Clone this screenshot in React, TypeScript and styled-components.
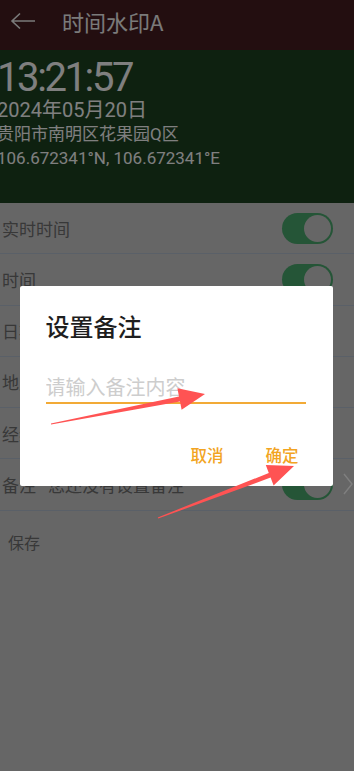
import React from "react";
import styled, { createGlobalStyle } from "styled-components";

const Global = createGlobalStyle`
  html, body { margin: 0; padding: 0; }
  body { background: #cccccc; font-family: "Noto Sans CJK SC", "Noto Sans", sans-serif; }
  * { box-sizing: border-box; }
`;

const Page = styled.div`
  width: 354px;
  min-height: 771px;
  background: #cccccc;
  overflow: hidden;
`;

const Header = styled.header`
  height: 50px;
  background: #461c20;
  display: flex;
  align-items: flex-start;
  padding: 11px 0 0 10px;
  gap: 26px;
`;

const BackIcon = styled.svg`
  width: 26px;
  height: 20px;
  flex: none;
`;

const Title = styled.h1`
  margin: 0;
  font-size: 22px;
  line-height: 21px;
  font-weight: 400;
  color: #f4f4f4;
`;

const Preview = styled.section`
  background: #1c4220;
  padding: 8px 0 28px 0;
  margin-left: -3px;
  color: #ffffff;
  height: 153px;
`;

const Clock = styled.div`
  font-family: Roboto, "Noto Sans CJK SC", sans-serif;
  font-size: 40px;
  line-height: 40px;
  letter-spacing: -2.4px;
`;

const InfoLine = styled.div<{ $size: number }>`
  font-family: Roboto, "Noto Sans CJK SC", sans-serif;
  font-size: ${(p) => p.$size}px;
  line-height: 24px;
  white-space: nowrap;
  &:first-of-type { margin-top: 5px; }
`;

const List = styled.div`
  display: flex;
  flex-direction: column;
`;

const Row = styled.div`
  height: 51.25px;
  display: flex;
  align-items: center;
  border-bottom: 1px solid #b4c0d0;
  padding: 0 0 0 2px;
`;

const RowLabel = styled.span`
  font-size: 17px;
  color: #707070;
  flex: 1;
  display: flex;
  gap: 12px;
  white-space: nowrap;
`;

const Switch = styled.div`
  width: 51px;
  height: 31px;
  border-radius: 16px;
  background: #4aaa6e;
  position: relative;
  margin-right: 21px;
  flex: none;
`;

const Knob = styled.div`
  position: absolute;
  right: 2px;
  top: 2px;
  width: 27px;
  height: 27px;
  border-radius: 50%;
  background: #cccccc;
`;

const Chevron = styled.svg`
  width: 10px;
  height: 22px;
  margin-left: -11px;
  margin-right: 1px;
  flex: none;
`;

const SaveText = styled.div`
  font-size: 16px;
  color: #707070;
  padding: 19px 0 0 8px;
  line-height: 24px;
`;

const Overlay = styled.div`
  position: fixed;
  inset: 0;
  background: rgba(0, 0, 0, 0.5);
  display: flex;
  align-items: center;
  justify-content: center;
  padding-right: 2px;
`;

const Dialog = styled.div`
  width: 313px;
  background: #ffffff;
  border-radius: 2px;
  padding: 24px 27px 19px 26px;
  display: flex;
  flex-direction: column;
`;

const DialogTitle = styled.h2`
  margin: 0;
  font-size: 24px;
  line-height: 32px;
  font-weight: 500;
  color: #1e1e1e;
`;

const Input = styled.input`
  margin-top: 30px;
  height: 32px;
  border: none;
  border-bottom: 2px solid #f2aa36;
  outline: none;
  padding: 0;
  font-family: "Noto Sans CJK SC", sans-serif;
  font-size: 20px;
  color: #222;
  background: transparent;
  &::placeholder { color: #cdcdcd; }
`;

const Actions = styled.div`
  margin-top: 39px;
  display: flex;
  justify-content: flex-end;
  gap: 42px;
  padding-right: 7px;
`;

const ActionButton = styled.button`
  border: none;
  background: none;
  padding: 0;
  font-family: "Noto Sans CJK SC", sans-serif;
  font-size: 16.5px;
  line-height: 24px;
  font-weight: 500;
  color: #f2a422;
`;

const Annotations = styled.svg`
  position: fixed;
  left: 0;
  top: 0;
  width: 354px;
  height: 771px;
  pointer-events: none;
`;

const rows = ["实时时间", "时间", "日期", "地点", "经纬度"];

export default function App() {
  return (
    <>
      <Global />
      <Page>
        <Header>
          <BackIcon viewBox="0 0 26 20">
            <path d="M25 10 H2 M10 2.5 L2 10 L10 17.5" fill="none" stroke="#f4f4f4" strokeWidth="1.6" />
          </BackIcon>
          <Title>时间水印A</Title>
        </Header>
        <Preview>
          <Clock>13:21:57</Clock>
          <InfoLine $size={20}>2024年05月20日</InfoLine>
          <InfoLine $size={17}>贵阳市南明区花果园Q区</InfoLine>
          <InfoLine $size={17}>106.672341°N, 106.672341°E</InfoLine>
        </Preview>
        <List>
          {rows.map((r) => (
            <Row key={r}>
              <RowLabel>{r}</RowLabel>
              <Switch>
                <Knob />
              </Switch>
            </Row>
          ))}
          <Row>
            <RowLabel>
              <span>备注</span>
              <span>您还没有设置备注</span>
            </RowLabel>
            <Switch>
              <Knob />
            </Switch>
            <Chevron viewBox="0 0 10 22">
              <path d="M1 1 L9 11 L1 21" fill="none" stroke="#ffffff" strokeWidth="1.4" />
            </Chevron>
          </Row>
        </List>
        <SaveText>保存</SaveText>
      </Page>
      <Overlay>
        <Dialog>
          <DialogTitle>设置备注</DialogTitle>
          <Input placeholder="请输入备注内容" />
          <Actions>
            <ActionButton>取消</ActionButton>
            <ActionButton>确定</ActionButton>
          </Actions>
        </Dialog>
      </Overlay>
      <Annotations viewBox="0 0 354 771">
        <polygon
          fill="#ff5353"
          points="50.9,423.4 179.0,396.5 177.4,388.2 205,394 181.6,409.8 180.0,401.5 51.1,424.6"
        />
        <polygon
          fill="#ff5353"
          points="157.8,517.4 268.8,473.0 265.8,465.0 294,466 273.6,485.6 270.6,477.6 158.2,518.6"
        />
      </Annotations>
    </>
  );
}
